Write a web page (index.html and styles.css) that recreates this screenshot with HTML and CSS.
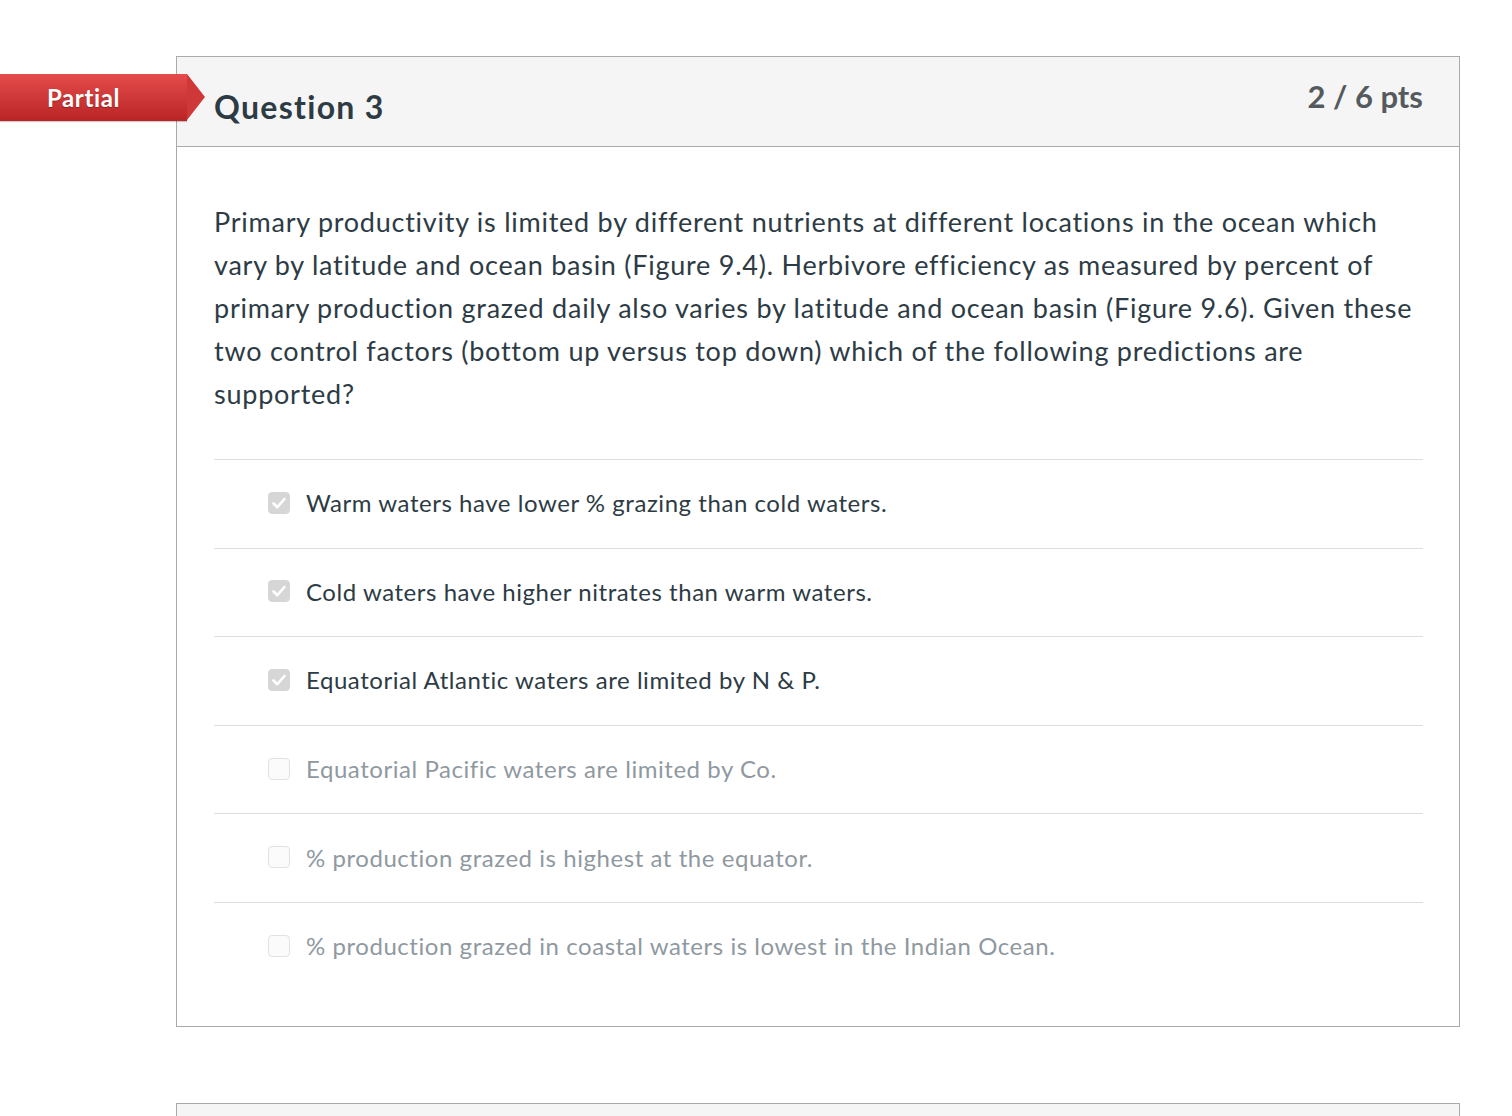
FILE: index.html
```html
<!DOCTYPE html>
<html lang="en">
<head>
<meta charset="utf-8">
<title>Question 3</title>
<link rel="stylesheet" href="styles.css">
</head>
<body>
<div class="page">
  <div class="question">
    <div class="ribbon"><span>Partial</span></div>
    <div class="q-header">
      <h2 class="q-title">Question 3</h2>
      <div class="q-points">2 / 6 pts</div>
    </div>
    <div class="q-body">
      <p class="q-text">Primary productivity is limited by different nutrients at different locations in the ocean which vary by latitude and ocean basin (Figure 9.4). Herbivore efficiency as measured by percent of primary production grazed daily also varies by latitude and ocean basin (Figure 9.6). Given these two control factors (bottom up versus top down) which of the following predictions are supported?</p>
      <ul class="answers">
        <li class="answer selected"><span class="box"><svg viewBox="0 0 22 22" width="22" height="22"><path d="M5.5 11.5 L9.3 15.2 L16.5 7" fill="none" stroke="#fff" stroke-width="2.6" stroke-linecap="round" stroke-linejoin="round"/></svg></span><span class="label">Warm waters have lower % grazing than cold waters.</span></li>
        <li class="answer selected"><span class="box"><svg viewBox="0 0 22 22" width="22" height="22"><path d="M5.5 11.5 L9.3 15.2 L16.5 7" fill="none" stroke="#fff" stroke-width="2.6" stroke-linecap="round" stroke-linejoin="round"/></svg></span><span class="label">Cold waters have higher nitrates than warm waters.</span></li>
        <li class="answer selected"><span class="box"><svg viewBox="0 0 22 22" width="22" height="22"><path d="M5.5 11.5 L9.3 15.2 L16.5 7" fill="none" stroke="#fff" stroke-width="2.6" stroke-linecap="round" stroke-linejoin="round"/></svg></span><span class="label">Equatorial Atlantic waters are limited by N &amp; P.</span></li>
        <li class="answer"><span class="box"></span><span class="label">Equatorial Pacific waters are limited by Co.</span></li>
        <li class="answer"><span class="box"></span><span class="label">% production grazed is highest at the equator.</span></li>
        <li class="answer"><span class="box"></span><span class="label">% production grazed in coastal waters is lowest in the Indian Ocean.</span></li>
      </ul>
    </div>
  </div>
  <div class="question next">
    <div class="q-header short"></div>
  </div>
</div>
</body>
</html>
```

FILE: styles.css
```css
html, body {
  margin: 0;
  padding: 0;
  background: #fff;
}
body {
  font-family: Lato, "Open Sans", sans-serif;
  color: #2d3b45;
}
.page {
  padding: 56px 52px 0 176px;
  width: 1284px;
}
.question {
  position: relative;
  border: 1px solid #aaaaaa;
  background: #fff;
}
.question.next {
  margin-top: 76px;
  border-bottom: none;
}
.q-header {
  height: 89px;
  background: #f5f5f5;
  border-bottom: 1px solid #aaaaaa;
  display: flex;
  justify-content: space-between;
  align-items: flex-start;
  padding: 0 36px 0 37px;
}
.q-header.short {
  height: 20px;
  border-bottom: none;
}
.q-title {
  margin: 30px 0 0;
  font-size: 32px;
  font-weight: 700;
  line-height: 40px;
  letter-spacing: 1.3px;
  color: #2d3b45;
}
.q-points {
  margin-top: 19px;
  font-size: 31px;
  font-weight: 700;
  line-height: 40px;
  color: #555a5e;
}
.ribbon {
  position: absolute;
  left: -177px;
  top: 17px;
  width: 187px;
  height: 47px;
  background: linear-gradient(#e54c4c, #b92424);
  box-shadow: 0 1px 1px rgba(0,0,0,0.2);
  display: flex;
  align-items: center;
  justify-content: center;
  padding-right: 20px;
  box-sizing: border-box;
}
.ribbon::after {
  content: "";
  position: absolute;
  right: -18px;
  top: 0;
  width: 0;
  height: 0;
  border-top: 23.5px solid transparent;
  border-bottom: 23.5px solid transparent;
  border-left: 18px solid #cf3838;
}
.ribbon span {
  color: #fff;
  font-size: 24px;
  font-weight: 700;
  letter-spacing: 0.6px;
  text-shadow: 0 1px 1px rgba(0,0,0,0.25);
}
.q-body {
  padding: 53px 36px 35px 37px;
}
.q-text {
  margin: 0 0 44px;
  font-size: 27px;
  line-height: 43px;
  letter-spacing: 0.75px;
  color: #2d3b45;
}
.answers {
  list-style: none;
  margin: 0;
  padding: 0;
}
.answer {
  height: 87.6px;
  box-sizing: content-box;
  border-top: 1px solid #dedede;
  display: flex;
  align-items: center;
  padding-left: 54px;
  font-size: 24px;
  letter-spacing: 0.55px;
}
.answer .box {
  width: 22px;
  height: 22px;
  box-sizing: border-box;
  border-radius: 4px;
  border: 1px solid #e2e2e2;
  background: #fbfbfb;
  margin: -2px 16px 0 0;
  flex: none;
  display: flex;
}
.answer.selected .box {
  background: #d6d6d6;
  border-color: #d6d6d6;
}
.answer .box svg {
  margin: -1px;
}
.answer .label {
  color: #8f999f;
  margin-top: -2px;
}
.answer.selected .label {
  color: #2d3b45;
}
```
